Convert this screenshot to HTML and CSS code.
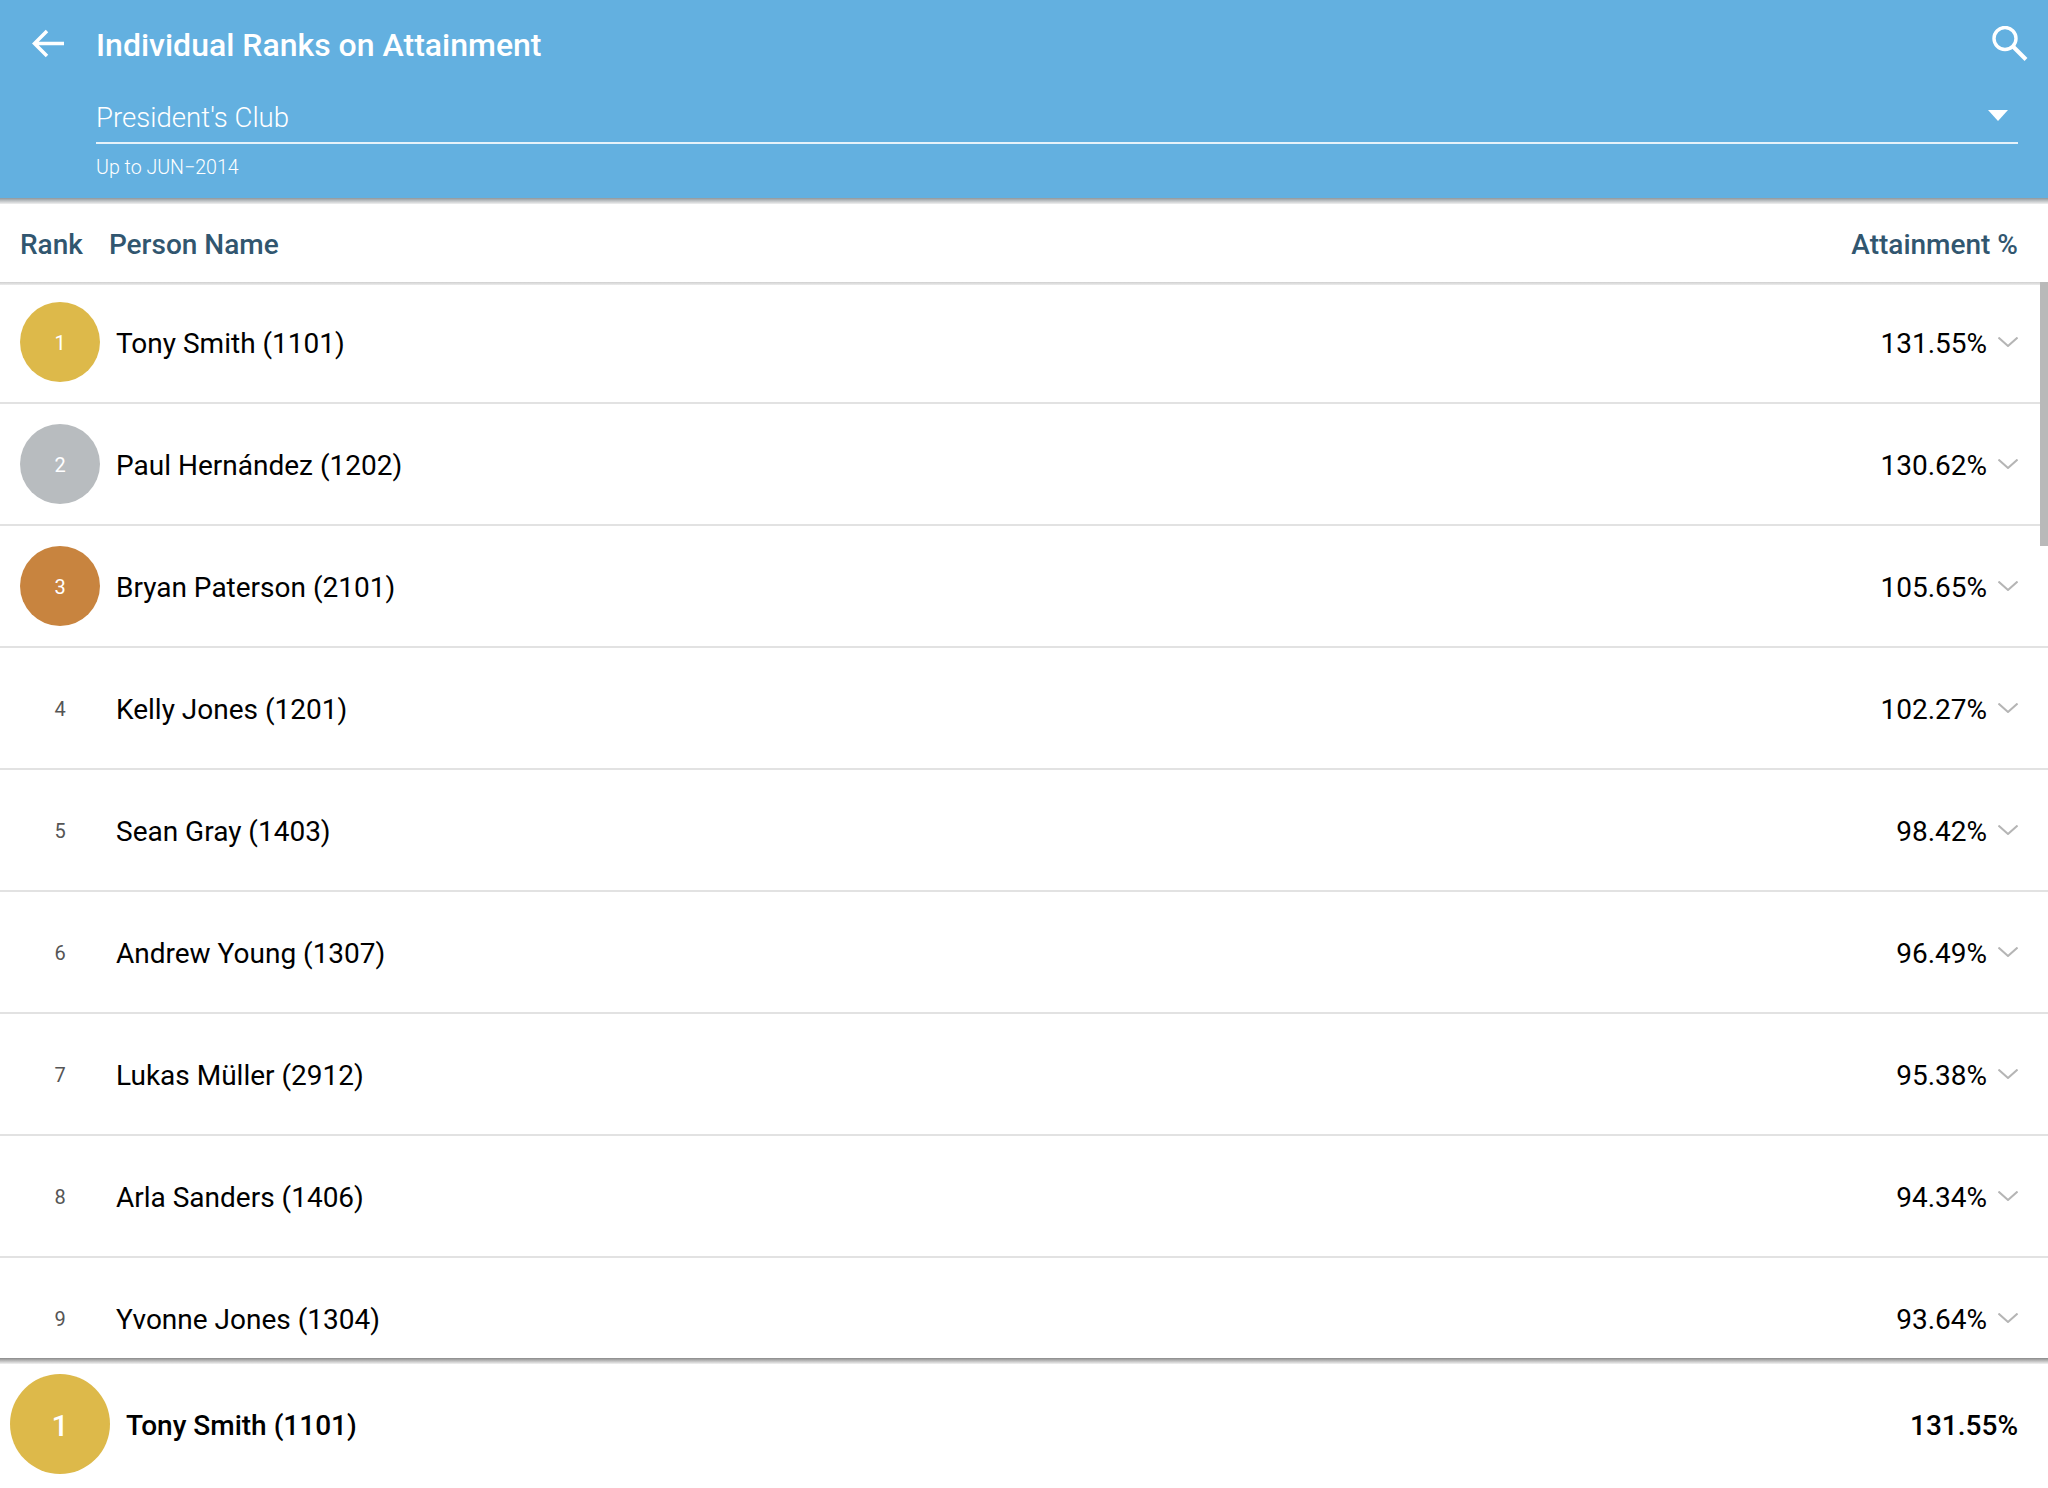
FILE: index.html
```html
<!DOCTYPE html>
<html lang="en">
<head>
<meta charset="utf-8">
<title>Individual Ranks on Attainment</title>
<link rel="stylesheet" href="styles.css">
</head>
<body>
<div class="app">
  <header class="appbar">
    <div class="appbar-top">
      <svg class="icon-back" viewBox="0 0 32 32" width="32" height="32"><path d="M32 15.500H3M15 3 2.500 15.500 15 28" fill="none" stroke="#fff" stroke-width="3.500"/></svg>
      <h1 class="title">Individual Ranks on Attainment</h1>
      <svg class="icon-search" viewBox="0 0 36 36" width="36" height="36"><circle cx="13" cy="12.500" r="11" fill="none" stroke="#fff" stroke-width="3.400"/><path d="M21 20.500 34 33.500" fill="none" stroke="#fff" stroke-width="4"/></svg>
    </div>
    <div class="select">
      <span class="select-value">President's Club</span>
      <span class="caret"></span>
    </div>
    <div class="period">Up to JUN−2014</div>
  </header>
  <div class="table-head">
    <span class="th-rank">Rank</span>
    <span class="th-name">Person Name</span>
    <span class="th-att">Attainment %</span>
  </div>
  <div class="list-wrap">
    <div class="row"><span class="rank gold">1</span><span class="name">Tony Smith (1101)</span><span class="pct">131.55%</span><svg class="chev" viewBox="0 0 20 10" width="20" height="10"><path d="M.5.500 10 9 19.500.5"/></svg></div>
    <div class="row"><span class="rank silver">2</span><span class="name">Paul Hernández (1202)</span><span class="pct">130.62%</span><svg class="chev" viewBox="0 0 20 10" width="20" height="10"><path d="M.5.500 10 9 19.500.5"/></svg></div>
    <div class="row"><span class="rank bronze">3</span><span class="name">Bryan Paterson (2101)</span><span class="pct">105.65%</span><svg class="chev" viewBox="0 0 20 10" width="20" height="10"><path d="M.5.500 10 9 19.500.5"/></svg></div>
    <div class="row"><span class="rank">4</span><span class="name">Kelly Jones (1201)</span><span class="pct">102.27%</span><svg class="chev" viewBox="0 0 20 10" width="20" height="10"><path d="M.5.500 10 9 19.500.5"/></svg></div>
    <div class="row"><span class="rank">5</span><span class="name">Sean Gray (1403)</span><span class="pct">98.42%</span><svg class="chev" viewBox="0 0 20 10" width="20" height="10"><path d="M.5.500 10 9 19.500.5"/></svg></div>
    <div class="row"><span class="rank">6</span><span class="name">Andrew Young (1307)</span><span class="pct">96.49%</span><svg class="chev" viewBox="0 0 20 10" width="20" height="10"><path d="M.5.500 10 9 19.500.5"/></svg></div>
    <div class="row"><span class="rank">7</span><span class="name">Lukas Müller (2912)</span><span class="pct">95.38%</span><svg class="chev" viewBox="0 0 20 10" width="20" height="10"><path d="M.5.500 10 9 19.500.5"/></svg></div>
    <div class="row"><span class="rank">8</span><span class="name">Arla Sanders (1406)</span><span class="pct">94.34%</span><svg class="chev" viewBox="0 0 20 10" width="20" height="10"><path d="M.5.500 10 9 19.500.5"/></svg></div>
    <div class="row"><span class="rank">9</span><span class="name">Yvonne Jones (1304)</span><span class="pct">93.64%</span><svg class="chev" viewBox="0 0 20 10" width="20" height="10"><path d="M.5.500 10 9 19.500.5"/></svg></div>
    <div class="scrollbar"></div>
  </div>
  <footer class="me">
    <span class="me-rank">1</span>
    <span class="me-name">Tony Smith (1101)</span>
    <span class="me-pct">131.55%</span>
  </footer>
</div>
</body>
</html>
```
FILE: styles.css
```css
* { box-sizing: border-box; }
html, body { margin: 0; padding: 0; height: 100%; }
body { font-family: Roboto, "Liberation Sans", sans-serif; background: #fff; color: #000; overflow: hidden; }
.app { display: flex; flex-direction: column; height: 1488px; }

.appbar { position: relative; flex: none; height: 198px; background: #63b0e0; color: #fff; padding: 0 30px 0 96px; }
.appbar::after { content: ""; position: absolute; left: 0; right: 0; top: 100%; height: 6px; background: linear-gradient(#8f979c, #f0f0f0); }
.appbar-top { display: flex; align-items: center; height: 88px; padding-top: 2px; position: relative; }
.icon-back { position: absolute; left: -64px; top: 28px; }
.icon-search { position: absolute; right: -10px; top: 26px; }
.title { margin: 0; font-size: 32px; font-weight: 500; line-height: 86px; }
.select { display: flex; align-items: center; justify-content: space-between; height: 56px; border-bottom: 2px solid #e6f2fa; }
.select-value { font-size: 27.6px; font-weight: 300; line-height: 40px; margin-top: 6px; }
.caret { width: 0; height: 0; border-left: 10px solid transparent; border-right: 10px solid transparent; border-top: 11px solid #fff; margin-right: 10px; }
.period { font-size: 19.6px; font-weight: 300; line-height: 24px; margin-top: 12px; }

.table-head { flex: none; display: flex; align-items: center; height: 84px; padding: 9px 30px 0 20px; color: #31566f; font-size: 28px; font-weight: 500; }
.th-name { margin-left: 26px; }
.th-att { margin-left: auto; }

.list-wrap { position: relative; flex: 1; min-height: 0; overflow: hidden; }
.list-wrap::before { content: ""; position: absolute; left: 0; right: 0; top: 0; height: 3px; background: linear-gradient(#cfcfcf, #ececec); }
.row { display: flex; align-items: center; height: 122px; padding: 0 30px 0 20px; border-bottom: 2px solid #e2e2e2; font-size: 28px; }
.rank { flex: none; display: flex; align-items: center; justify-content: center; width: 80px; height: 80px; padding-top: 2px; border-radius: 50%; font-size: 20px; color: #555; }
.gold, .silver, .bronze { color: #fff; }
.gold { background: #ddb94a; }
.silver { background: #b8bcbf; }
.bronze { background: #c8843f; }
.name { margin-left: 16px; padding-top: 2px; }
.pct { margin-left: auto; padding-top: 2px; }
.chev { flex: none; margin-left: 11px; fill: none; stroke: #b5b5b5; stroke-width: 2; }
.scrollbar { position: absolute; right: 0; top: 0; width: 8px; height: 264px; background: #b9b9b9; }

.me { position: relative; flex: none; display: flex; align-items: center; height: 130px; padding: 2px 30px 0 10px; background: #fff; font-size: 28px; font-weight: 500; }
.me::before { content: ""; position: absolute; left: 0; right: 0; top: 0; height: 6px; background: linear-gradient(#8a8a8a, #f2f2f2); }
.me-rank { flex: none; display: flex; align-items: center; justify-content: center; width: 100px; height: 100px; padding-top: 2px; border-radius: 50%; background: #ddb94a; color: #fff; font-size: 30px; }
.me-name { margin-left: 16px; padding-top: 2px; }
.me-pct { margin-left: auto; padding-top: 2px; }
```
